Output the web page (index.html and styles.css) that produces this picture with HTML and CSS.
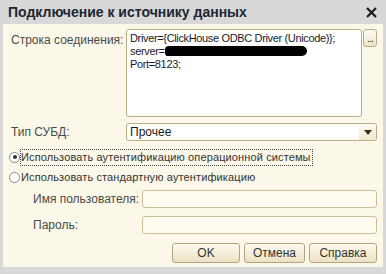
FILE: index.html
```html
<!DOCTYPE html>
<html>
<head>
<meta charset="utf-8">
<link rel="stylesheet" href="styles.css">
</head>
<body>
<div class="window">
  <div class="titlebar">
    <span class="title">Подключение к источнику данных</span>
    <svg class="close" width="11" height="11" viewBox="0 0 11 11"><path d="M1 1L10 10M10 1L1 10" stroke="#1b1b1b" stroke-width="2.2" stroke-linecap="butt"/></svg>
  </div>
  <div class="content">
    <div class="row row-conn">
      <div class="label">Строка соединения:</div>
      <div class="textarea">Driver={ClickHouse ODBC Driver (Unicode)};<br>server=<span class="redact"></span><br>Port=8123;</div>
      <div class="dots">...</div>
    </div>
    <div class="row row-type">
      <div class="label">Тип СУБД:</div>
      <div class="select"><span class="select-text">Прочее</span><span class="arrow"><span class="tri"></span></span></div>
    </div>
    <div class="radio-row first">
      <span class="radio checked"></span><span class="radio-label focus">Использовать аутентификацию операционной системы</span>
    </div>
    <div class="radio-row second">
      <span class="radio"></span><span class="radio-label">Использовать стандартную аутентификацию</span>
    </div>
    <div class="row field user">
      <div class="label sub">Имя пользователя:</div>
      <div class="input"></div>
    </div>
    <div class="row field pass">
      <div class="label sub">Пароль:</div>
      <div class="input"></div>
    </div>
    <div class="buttons">
      <div class="btn ok">OK</div>
      <div class="btn cancel">Отмена</div>
      <div class="btn help">Справка</div>
    </div>
  </div>
</div>
</body>
</html>
```
FILE: styles.css
```css
* { box-sizing: border-box; }
html, body { margin: 0; padding: 0; }
body {
  width: 386px;
  height: 274px;
  overflow: hidden;
  font-family: "Liberation Sans", Arial, sans-serif;
  font-size: 12px;
  background: #d6d6d6;
}
.window {
  width: 386px;
  height: 274px;
  display: flex;
  flex-direction: column;
  background: #d8d8d8;
}
.titlebar {
  height: 24px;
  display: flex;
  align-items: center;
  justify-content: space-between;
  padding: 0 9px 0 8px;
  background: #d8d8d8;
}
.title {
  font-weight: bold;
  font-size: 14px;
  color: #1c2733;
}
.close { display: block; }
.content {
  flex: 1;
  margin: 0 3px 7px 3px;
  background: #fbf8e9;
  padding: 5px 6px 0 8px;
  display: flex;
  flex-direction: column;
  color: #4a4a4a;
}
.row { display: flex; align-items: flex-start; }
.label { width: 115px; flex: none; }
.row-conn .label { padding-top: 4px; }
.textarea {
  width: 237px;
  height: 88px;
  background: #ffffff;
  border: 1px solid #bcae83;
  border-radius: 3px;
  padding: 2px 3px;
  font-size: 11px;
  letter-spacing: -0.35px;
  line-height: 13px;
  color: #1a1a2a;
  white-space: nowrap;
  overflow: hidden;
}
.redact {
  display: inline-block;
  width: 142px;
  height: 10px;
  background: #000;
  border-radius: 6px 8px 8px 5px;
  vertical-align: -1px;
}
.dots {
  width: 14px;
  height: 18px;
  margin-left: 1px;
  border: 1px solid #b9ad88;
  border-radius: 3px;
  background: linear-gradient(#fdfbf2, #ece4c8);
  color: #333;
  font-size: 11px;
  line-height: 16px;
  text-align: center;
  letter-spacing: -1px;
}
.row-type { margin-top: 6px; align-items: center; }
.select {
  flex: 1;
  height: 18px;
  border: 1px solid #bcae83;
  border-radius: 3px;
  background: #ffffff;
  display: flex;
  align-items: center;
  justify-content: space-between;
  color: #1a1a1a;
}
.select-text { padding-left: 3px; }
.arrow {
  width: 17px;
  height: 16px;
  display: flex;
  align-items: center;
  justify-content: center;
  background: linear-gradient(#fdfbf3, #efe8d0);
  border-radius: 0 2px 2px 0;
}
.tri {
  width: 0; height: 0;
  border-left: 4px solid transparent;
  border-right: 4px solid transparent;
  border-top: 5px solid #3a2e12;
}
.radio-row {
  display: flex;
  align-items: center;
  height: 16px;
  color: #333;
  margin-left: -2px;
}
.radio-row.first { margin-top: 8px; }
.radio-row.second { margin-top: 4px; }
.radio {
  width: 11px;
  height: 11px;
  border: 1px solid #8a8a8a;
  border-radius: 50%;
  background: #fff;
  position: relative;
  flex: none;
}
.radio.checked::after {
  content: "";
  position: absolute;
  left: 2.5px; top: 2.5px;
  width: 4px; height: 4px;
  border-radius: 50%;
  background: #333;
}
.radio-label {
  padding: 1px 1px 1px 0;
  line-height: 13px;
  font-size: 11px;
  letter-spacing: 0.12px;
}
.radio-label.focus { border: 1px dotted #444; }
.radio-label:not(.focus) { border: 1px solid transparent; }
.field { align-items: center; }
.field.user { margin-top: 5px; }
.field.pass { margin-top: 8px; }
.label.sub { width: 131px; padding-left: 22px; color: #4a4a4a; }
.input {
  flex: 1;
  height: 18px;
  border: 1px solid #c9bd97;
  border-radius: 3px;
  background: #fefcf1;
}
.buttons {
  margin-top: 9px;
  display: flex;
  justify-content: flex-end;
  gap: 4px;
}
.btn {
  height: 20px;
  border: 1px solid #b3a67e;
  border-radius: 3px;
  background: linear-gradient(#fdfaee, #ebe2c4);
  color: #333;
  text-align: center;
  line-height: 18px;
}
.btn.ok { width: 68px; }
.btn.cancel { width: 61px; }
.btn.help { width: 68px; }
```
